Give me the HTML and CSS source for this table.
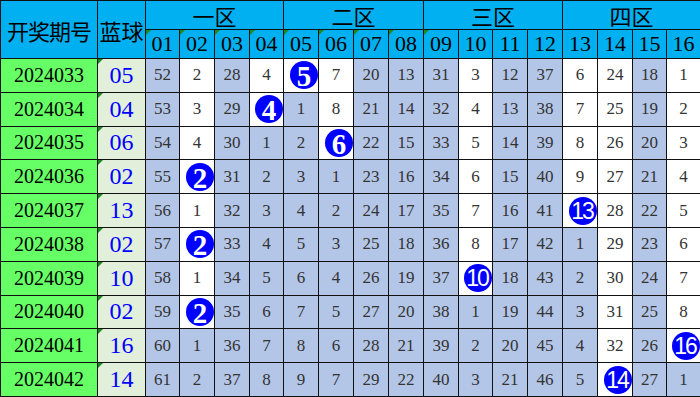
FILE: index.html
```html
<!DOCTYPE html>
<html>
<head>
    <title>蓝球走势</title>
    <meta charset="utf-8">
    <meta name="viewport" content="width=device-width, initial-scale=1.0">
    <link rel="stylesheet" href="styles.css">
</head>
<body>
    <table class="trend">
        <colgroup>
            <col class="c-qi">
            <col class="c-lan">
            <col class="n34"><col class="n35"><col class="n35"><col class="n34">
            <col class="n35"><col class="n35"><col class="n35"><col class="n35">
            <col class="n35"><col class="n34"><col class="n35"><col class="n35">
            <col class="n35"><col class="n35"><col class="n34"><col class="n34">
        </colgroup>
        <thead>
            <tr class="head-top">
                <th rowspan="2" class="qi-head">开奖期号</th>
                <th rowspan="2" class="lan-head">蓝球</th>
                <th colspan="4" class="qu">一区</th>
                <th colspan="4" class="qu">二区</th>
                <th colspan="4" class="qu">三区</th>
                <th colspan="4" class="qu">四区</th>
            </tr>
            <tr class="head-num">
                <th class="tri">01</th><th class="tri">02</th><th class="tri">03</th><th class="tri">04</th>
                <th class="tri">05</th><th class="tri">06</th><th class="tri">07</th><th class="tri">08</th>
                <th class="tri">09</th><th>10</th><th>11</th><th>12</th>
                <th>13</th><th>14</th><th>15</th><th>16</th>
            </tr>
        </thead>
        <tbody>
            <tr>
                <td class="qi">2024033</td><td class="lan tri">05</td>
                <td class="s">52</td><td>2</td><td class="s">28</td><td>4</td>
                <td class="b"><span class="ball">5</span></td><td>7</td><td class="s">20</td><td class="s">13</td>
                <td class="s">31</td><td>3</td><td class="s">12</td><td class="s">37</td>
                <td>6</td><td>24</td><td class="s">18</td><td>1</td>
            </tr>
            <tr>
                <td class="qi">2024034</td><td class="lan tri">04</td>
                <td class="s">53</td><td>3</td><td class="s">29</td><td class="b"><span class="ball">4</span></td>
                <td class="s">1</td><td>8</td><td class="s">21</td><td class="s">14</td>
                <td class="s">32</td><td>4</td><td class="s">13</td><td class="s">38</td>
                <td>7</td><td>25</td><td class="s">19</td><td>2</td>
            </tr>
            <tr>
                <td class="qi">2024035</td><td class="lan tri">06</td>
                <td class="s">54</td><td>4</td><td class="s">30</td><td class="s">1</td>
                <td class="s">2</td><td class="b"><span class="ball">6</span></td><td class="s">22</td><td class="s">15</td>
                <td class="s">33</td><td>5</td><td class="s">14</td><td class="s">39</td>
                <td>8</td><td>26</td><td class="s">20</td><td>3</td>
            </tr>
            <tr>
                <td class="qi">2024036</td><td class="lan tri">02</td>
                <td class="s">55</td><td class="b"><span class="ball">2</span></td><td class="s">31</td><td class="s">2</td>
                <td class="s">3</td><td class="s">1</td><td class="s">23</td><td class="s">16</td>
                <td class="s">34</td><td>6</td><td class="s">15</td><td class="s">40</td>
                <td>9</td><td>27</td><td class="s">21</td><td>4</td>
            </tr>
            <tr>
                <td class="qi">2024037</td><td class="lan tri">13</td>
                <td class="s">56</td><td>1</td><td class="s">32</td><td class="s">3</td>
                <td class="s">4</td><td class="s">2</td><td class="s">24</td><td class="s">17</td>
                <td class="s">35</td><td>7</td><td class="s">16</td><td class="s">41</td>
                <td class="b"><span class="ball two">13</span></td><td>28</td><td class="s">22</td><td>5</td>
            </tr>
            <tr>
                <td class="qi">2024038</td><td class="lan tri">02</td>
                <td class="s">57</td><td class="b"><span class="ball">2</span></td><td class="s">33</td><td class="s">4</td>
                <td class="s">5</td><td class="s">3</td><td class="s">25</td><td class="s">18</td>
                <td class="s">36</td><td>8</td><td class="s">17</td><td class="s">42</td>
                <td class="s">1</td><td>29</td><td class="s">23</td><td>6</td>
            </tr>
            <tr>
                <td class="qi">2024039</td><td class="lan tri">10</td>
                <td class="s">58</td><td>1</td><td class="s">34</td><td class="s">5</td>
                <td class="s">6</td><td class="s">4</td><td class="s">26</td><td class="s">19</td>
                <td class="s">37</td><td class="b"><span class="ball two">10</span></td><td class="s">18</td><td class="s">43</td>
                <td class="s">2</td><td>30</td><td class="s">24</td><td>7</td>
            </tr>
            <tr>
                <td class="qi">2024040</td><td class="lan tri">02</td>
                <td class="s">59</td><td class="b"><span class="ball">2</span></td><td class="s">35</td><td class="s">6</td>
                <td class="s">7</td><td class="s">5</td><td class="s">27</td><td class="s">20</td>
                <td class="s">38</td><td class="s">1</td><td class="s">19</td><td class="s">44</td>
                <td class="s">3</td><td>31</td><td class="s">25</td><td>8</td>
            </tr>
            <tr>
                <td class="qi">2024041</td><td class="lan tri">16</td>
                <td class="s">60</td><td class="s">1</td><td class="s">36</td><td class="s">7</td>
                <td class="s">8</td><td class="s">6</td><td class="s">28</td><td class="s">21</td>
                <td class="s">39</td><td class="s">2</td><td class="s">20</td><td class="s">45</td>
                <td class="s">4</td><td>32</td><td class="s">26</td><td class="b"><span class="ball two">16</span></td>
            </tr>
            <tr>
                <td class="qi">2024042</td><td class="lan tri">14</td>
                <td class="s">61</td><td class="s">2</td><td class="s">37</td><td class="s">8</td>
                <td class="s">9</td><td class="s">7</td><td class="s">29</td><td class="s">22</td>
                <td class="s">40</td><td class="s">3</td><td class="s">21</td><td class="s">46</td>
                <td class="s">5</td><td class="b"><span class="ball two">14</span></td><td class="s">27</td><td class="s">1</td>
            </tr>
        </tbody>
    </table>
</body>
</html>
```
FILE: styles.css
```css
body {
    margin: 0;
    background-color: white;
}

.trend {
    width: 700px;
    table-layout: fixed;
    border-collapse: collapse;
    font-family: "Liberation Serif", serif;
    color: #333;
}

.c-qi { width: 97px; }
.c-lan { width: 48px; }
.n34 { width: 34px; }
.n35 { width: 35px; }

.trend th,
.trend td {
    border: 1px solid #111;
    padding: 0;
    text-align: center;
    position: relative;
}

/* kopf */
.trend th {
    background-color: #00b0f0;
    color: black;
    font-weight: normal;
}

.head-top th {
    height: 28px;
}

.head-num th {
    height: 28px;
    font-size: 22px;
}

.qu,
.qi-head,
.lan-head {
    font-family: "Noto Sans CJK SC", sans-serif;
    font-size: 22px;
    line-height: 1;
}

.qi-head {
    letter-spacing: -1px;
}

/* zeilen */
.trend tbody tr {
    height: 33.8px;
}

.trend td {
    font-size: 17px;
    background-color: white;
}

.trend td.s {
    background-color: #b4c6e7;
}

.trend td.qi {
    background-color: #66ff66;
    color: black;
    font-size: 20px;
}

.trend td.lan {
    background-color: #e2efda;
    color: #0000ff;
    font-size: 24px;
}

.trend td.b {
    text-align: right;
    line-height: 0;
}

.ball {
    display: inline-block;
    width: 28px;
    height: 28px;
    border-radius: 50%;
    background-color: #0000ff;
    color: white;
    font-size: 29px;
    font-weight: bold;
    line-height: 30px;
    text-align: center;
    vertical-align: middle;
}

.ball.two {
    font-family: "Liberation Sans", sans-serif;
    font-weight: normal;
    font-size: 23px;
    letter-spacing: -2px;
    text-indent: -2px;
    line-height: 28px;
}

/* kleine gruene ecken */
.tri::before {
    content: "";
    position: absolute;
    top: 0;
    left: 0;
    border-top: 5px solid #1f8a1f;
    border-right: 5px solid transparent;
}
```
